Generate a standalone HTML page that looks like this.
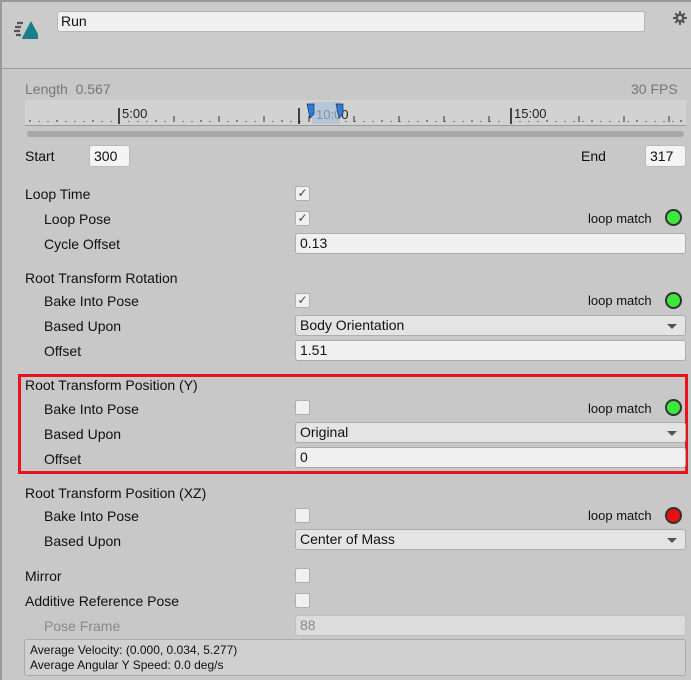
<!DOCTYPE html><html><head><style>
body{margin:0;width:691px;height:680px;background:#c8c8c8;font-family:"Liberation Sans",sans-serif;font-size:14px;color:#101010;position:relative;overflow:hidden}
.a{position:absolute;white-space:nowrap}
.t{position:absolute;white-space:nowrap;line-height:16px}
.cb{position:absolute;left:295px;width:15px;height:15px;background:#f0f0f0;border:1px solid #b0b0b0;border-radius:2px;box-sizing:border-box;font-size:12px;line-height:13px;text-align:center;color:#444}
.f{position:absolute;left:295px;width:391px;height:21px;background:#f0f0f0;border:1px solid #adadad;border-radius:3px;box-sizing:border-box;padding-left:4px;line-height:19px}
.dd{background:#e4e4e4}
.dd:after{content:"";position:absolute;right:8px;top:8px;border:5px solid transparent;border-top:5px solid #555;border-bottom:0}
.lm{position:absolute;left:588px;font-size:13px}
.led{position:absolute;left:665px;width:17px;height:17px;border-radius:50%;box-sizing:border-box;border:2px solid #333}
</style></head><body>
<div class="a" style="left:0;top:0;width:691px;height:69px;background:#cbcbcb;border-top:2px solid #999;border-bottom:1px solid #999;box-sizing:border-box"></div>
<div class="a" style="left:0;top:0;width:2px;height:680px;background:#999"></div>
<svg class="a" style="left:8px;top:12px" width="30" height="30"><path d="M14 26 L23 9 L32 26 Q32 27 31 27 L15 27 Q14 27 14 26 Z" fill="#1a7f8c"/><path d="M9 11h6M7 15h6M6 19h6M8 23h5" stroke="#555" stroke-width="2.2"/></svg>
<div class="a" style="left:57px;top:11px;width:588px;height:21px;background:#f0f0f0;border:1px solid #b5b5b5;border-radius:3px;box-sizing:border-box;padding-left:3px;line-height:19px">Run</div>
<svg class="a" style="left:673px;top:11px" width="14" height="14"><g fill="#555"><circle cx="7" cy="7" r="4.5"/><path d="M6 0h2v3h-2zM6 11h2v3h-2zM0 6h3v2h-3zM11 6h3v2h-3zM1.5 3l1.5-1.5 2 2-1.5 1.5zM10.5 12.5l-2-2 1.5-1.5 2 2zM12.5 3l-1.5-1.5-2 2 1.5 1.5zM1.5 11l1.5 1.5 2-2-1.5-1.5z"/></g><circle cx="7" cy="7" r="2" fill="#cbcbcb"/></svg>
<div class="t" style="left:25px;top:81px;color:#777">Length&nbsp; 0.567</div>
<div class="t" style="left:631px;top:81px;color:#777">30 FPS</div>
<div class="a" style="left:25px;top:100px;width:661px;height:25px;background:#d2d2d2;border-bottom:1px solid #999"></div>
<svg class="a" style="left:25px;top:100px" width="661" height="26">
<g stroke="#333" stroke-width="1">
<path d="M5 20v2M14 21v1M23 21v1M32 20v2M41 21v1M50 21v1M59 21v1M68 20v2M77 21v1M86 21v1M104 21v1M113 21v1M122 21v1M131 20v2M140 21v1M149 21v1M158 21v1M167 21v1M176 20v2M185 21v1M194 21v1M203 21v1M212 20v2M221 21v1M230 21v1M239 21v1M248 21v1M257 20v2M266 21v1M275 21v1M284 21v1M321 21v1M330 21v1M339 21v1M348 21v1M357 20v2M366 21v1M375 21v1M384 21v1M393 21v1M402 20v2M411 21v1M420 21v1M429 21v1M438 21v1M447 20v2M456 21v1M465 21v1M474 21v1M495 21v1M504 21v1M513 21v1M522 20v2M531 21v1M540 21v1M549 21v1M558 21v1M567 20v2M576 21v1M585 21v1M594 21v1M603 21v1M612 20v2M621 21v1M630 21v1M639 21v1M648 21v1M656 20v2"/>
<path d="M149 16v6M194 16v6M239 16v6M284 16v6M329 16v6M374 16v6M419 16v6M464 16v6M554 16v6M599 16v6M644 16v6"/>
</g>
<path d="M94 8v16M274 8v16M486 8v16" stroke="#111" stroke-width="1.5"/>
<text x="97" y="18" font-size="13" fill="#222">5:00</text><text x="291" y="19" font-size="13" fill="#222">10:00</text><text x="489" y="18" font-size="13" fill="#222">15:00</text>
<rect x="287" y="2" width="28" height="22" fill="#a8c0dc" opacity=".7"/>
<path d="M282 4h7v10l-4 4z M311 4h7v10l-4 4z" fill="#2e7be0" stroke="#234" stroke-width=".7"/>
</svg>
<div class="a" style="left:27px;top:131px;width:657px;height:6px;background:#a8a8a8;border-radius:3px"></div>
<div class="t" style="left:25px;top:148px">Start</div>
<div class="a" style="left:89px;top:145px;width:41px;height:22px;background:#f4f4f4;border:1px solid #bbb;border-radius:3px;box-sizing:border-box;padding-left:4px;line-height:20px">300</div>
<div class="t" style="left:581px;top:148px">End</div>
<div class="a" style="left:645px;top:145px;width:41px;height:22px;background:#f4f4f4;border:1px solid #bbb;border-radius:3px;box-sizing:border-box;padding-left:4px;line-height:20px">317</div>

<div class="t" style="left:25px;top:186px">Loop Time</div><div class="cb" style="top:186px">✓</div>
<div class="t" style="left:44px;top:211px">Loop Pose</div><div class="cb" style="top:211px">✓</div>
<div class="lm" style="top:211px">loop match</div><div class="led" style="top:209px;background:#3de83d"></div>
<div class="t" style="left:44px;top:236px">Cycle Offset</div><div class="f" style="top:233px">0.13</div>

<div class="t" style="left:25px;top:270px">Root Transform Rotation</div>
<div class="t" style="left:44px;top:293px">Bake Into Pose</div><div class="cb" style="top:293px">✓</div>
<div class="lm" style="top:293px">loop match</div><div class="led" style="top:292px;background:#3de83d"></div>
<div class="t" style="left:44px;top:318px">Based Upon</div><div class="f dd" style="top:315px">Body Orientation</div>
<div class="t" style="left:44px;top:343px">Offset</div><div class="f" style="top:340px">1.51</div>

<div class="a" style="left:18px;top:374px;width:670px;height:100px;border:3px solid #e8141c;box-sizing:border-box"></div>
<div class="t" style="left:25px;top:377px">Root Transform Position (Y)</div>
<div class="t" style="left:44px;top:401px">Bake Into Pose</div><div class="cb" style="top:400px"></div>
<div class="lm" style="top:401px">loop match</div><div class="led" style="top:399px;background:#3de83d"></div>
<div class="t" style="left:44px;top:426px">Based Upon</div><div class="f dd" style="top:422px">Original</div>
<div class="t" style="left:44px;top:451px">Offset</div><div class="f" style="top:447px">0</div>

<div class="t" style="left:25px;top:485px">Root Transform Position (XZ)</div>
<div class="t" style="left:44px;top:508px">Bake Into Pose</div><div class="cb" style="top:508px"></div>
<div class="lm" style="top:508px">loop match</div><div class="led" style="top:507px;background:#e81010"></div>
<div class="t" style="left:44px;top:533px">Based Upon</div><div class="f dd" style="top:529px">Center of Mass</div>

<div class="t" style="left:25px;top:568px">Mirror</div><div class="cb" style="top:568px"></div>
<div class="t" style="left:25px;top:593px">Additive Reference Pose</div><div class="cb" style="top:593px"></div>
<div class="t" style="left:44px;top:618px;color:#888">Pose Frame</div><div class="f" style="top:615px;background:#dcdcdc;color:#888;border-color:#c0c0c0">88</div>
<div class="a" style="left:24px;top:639px;width:662px;height:37px;background:#d0d0d0;border:1px solid #aaa;border-radius:3px;box-sizing:border-box;padding:3px 5px;font-size:12px;line-height:15px">Average Velocity: (0.000, 0.034, 5.277)<br>Average Angular Y Speed: 0.0 deg/s</div>
</body></html>
